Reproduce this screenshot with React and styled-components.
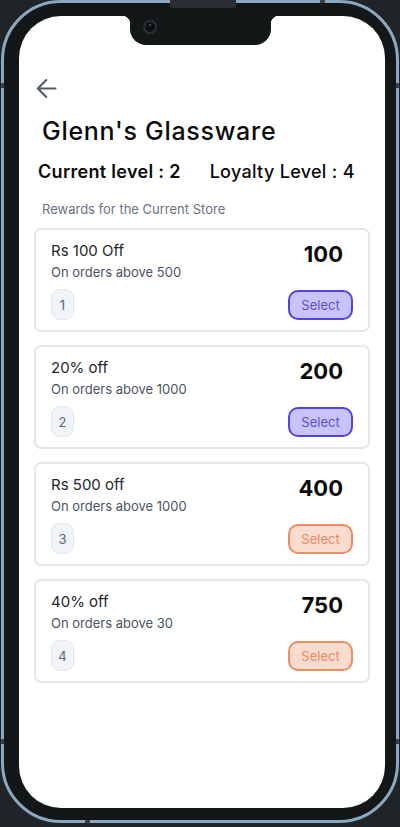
import React from 'react';
import styled, { createGlobalStyle, css } from 'styled-components';

const GlobalStyle = createGlobalStyle`
    html, body {
        margin: 0;
        padding: 0;
        background: #202428;
    }
    body {
        font-family: Inter, "Noto Sans", "Liberation Sans", sans-serif;
    }
    * {
        box-sizing: border-box;
    }
`;

const Page = styled.div`
    width: 400px;
    height: 827px;
    padding: 0 1px 4px 1px;
    background: #202428;
`;

const Frame = styled.div`
    position: relative;
    height: 100%;
    border: 3px solid #8aa8bf;
    border-radius: 60px;
    background: #131718;
    padding: 13px 11px 12px 15px;
    display: flex;
`;

const Speaker = styled.div`
    position: absolute;
    top: -3px;
    left: 166px;
    width: 66px;
    height: 8px;
    background: #2a2e33;
    border-radius: 0 0 3px 3px;
`;

const Band = styled.div`
    position: absolute;
    background: #3a4249;
    ${({ $side, $at }) => {
        if ($side === 'left') return css`left: -3px; top: ${$at}px; width: 3px; height: 5px;`;
        if ($side === 'right') return css`right: -3px; top: ${$at}px; width: 3px; height: 5px;`;
        if ($side === 'top') return css`top: -3px; left: ${$at}px; width: 5px; height: 3px;`;
        return css`bottom: -3px; left: ${$at}px; width: 5px; height: 3px;`;
    }}
`;

const Screen = styled.div`
    position: relative;
    flex: 1;
    background: #ffffff;
    border-radius: 42px;
    overflow: hidden;
    padding: 61px 15px 0 15px;
    display: flex;
    flex-direction: column;
`;

const Notch = styled.div`
    position: absolute;
    top: 0;
    left: 111px;
    width: 141px;
    height: 29px;
    background: #131718;
    border-radius: 0 0 16px 16px;

    &::before,
    &::after {
        content: '';
        position: absolute;
        top: 0;
        width: 8px;
        height: 8px;
    }
    &::before {
        left: -8px;
        background: radial-gradient(circle at 0 100%, transparent 8px, #131718 8.5px);
    }
    &::after {
        right: -8px;
        background: radial-gradient(circle at 100% 100%, transparent 8px, #131718 8.5px);
    }
`;

const Camera = styled.div`
    position: absolute;
    top: 4px;
    left: 13px;
    width: 14px;
    height: 14px;
    border-radius: 50%;
    background: #0c0e0f;
    border: 2px solid #2c3135;

    &::after {
        content: '';
        position: absolute;
        top: 2px;
        left: 4px;
        width: 2px;
        height: 2px;
        border-radius: 50%;
        background: #5a6066;
    }
`;

const BackButton = styled.button`
    align-self: flex-start;
    width: 22px;
    height: 22px;
    margin-left: 1px;
    padding: 0;
    border: none;
    background: none;
    color: #515a66;
    display: flex;
    align-items: center;
    justify-content: center;
`;

const Title = styled.h1`
    margin: 17px 0 0 8px;
    font-size: 25px;
    font-weight: 500;
    line-height: normal;
    color: #0a0a0a;
    letter-spacing: 0.7px;
`;

const LevelRow = styled.div`
    display: flex;
    gap: 29px;
    margin: 15px 0 0 4px;
`;

const LevelText = styled.span`
    font-size: 18px;
    font-weight: ${({ $strong }) => ($strong ? 600 : 500)};
    letter-spacing: 0.3px;
    color: #0a0a0a;
`;

const SectionLabel = styled.p`
    margin: 19px 0 0 8px;
    font-size: 13px;
    color: #6b7280;
`;

const CardList = styled.div`
    display: flex;
    flex-direction: column;
    gap: 13px;
    margin-top: 11px;
`;

const Card = styled.div`
    border: 2px solid #e3e6ea;
    border-radius: 7px;
    padding: 11px 15px 10px 15px;
    display: flex;
    flex-direction: column;
    gap: 8px;
`;

const CardTop = styled.div`
    display: flex;
    justify-content: space-between;
    align-items: flex-start;
`;

const Offer = styled.div`
    display: flex;
    flex-direction: column;
    gap: 2px;
`;

const OfferTitle = styled.span`
    font-size: 15px;
    line-height: 20px;
    color: #27272a;
`;

const OfferNote = styled.span`
    font-size: 13px;
    line-height: 18px;
    color: #4b5563;
`;

const Points = styled.span`
    font-size: 22px;
    font-weight: 650;
    line-height: normal;
    color: #0a0a0a;
    margin-right: 10px;
`;

const CardBottom = styled.div`
    display: flex;
    justify-content: space-between;
    align-items: center;
`;

const LevelBadge = styled.span`
    width: 23px;
    height: 31px;
    border-radius: 9px;
    background: #f1f4f8;
    border: 1.5px solid #e1e5ea;
    display: flex;
    align-items: center;
    justify-content: center;
    font-size: 13px;
    color: #5f6672;
`;

const tones = {
    purple: css`
        background: #c8c4fb;
        border-color: #4f45e4;
        color: #5b50d8;
    `,
    orange: css`
        background: #fadccf;
        border-color: #f08c63;
        color: #ee8a61;
    `,
};

const SelectButton = styled.button`
    width: 65px;
    height: 30px;
    border-radius: 10px;
    border: 2px solid;
    font-family: inherit;
    font-size: 13px;
    padding: 0;
    ${({ $tone }) => tones[$tone]}
`;

const rewards = [
    { title: 'Rs 100 Off', note: 'On orders above 500', points: 100, level: 1 },
    { title: '20% off', note: 'On orders above 1000', points: 200, level: 2 },
    { title: 'Rs 500 off', note: 'On orders above 1000', points: 400, level: 3 },
    { title: '40% off', note: 'On orders above 30', points: 750, level: 4 },
];

const currentLevel = 2;

const ArrowLeft = () => (
    <svg width="21" height="21" viewBox="0 0 21 21" fill="none" stroke="currentColor"
        strokeWidth="2" strokeLinecap="round" strokeLinejoin="round">
        <path d="M19.5 10.5H1.8M10.3 2 1.8 10.5 10.3 19" />
    </svg>
);

const App = () => {
    return (
        <Page>
            <GlobalStyle />
            <Frame>
                <Speaker />
                <Band $side="left" $at={80} />
                <Band $side="left" $at={736} />
                <Band $side="right" $at={80} />
                <Band $side="right" $at={736} />
                <Band $side="top" $at={316} />
                <Band $side="bottom" $at={81} />
                <Screen>
                    <Notch>
                        <Camera />
                    </Notch>
                    <BackButton aria-label="Back">
                        <ArrowLeft />
                    </BackButton>
                    <Title>Glenn's Glassware</Title>
                    <LevelRow>
                        <LevelText $strong>Current level : {currentLevel}</LevelText>
                        <LevelText>Loyalty Level : 4</LevelText>
                    </LevelRow>
                    <SectionLabel>Rewards for the Current Store</SectionLabel>
                    <CardList>
                        {rewards.map((r) => (
                            <Card key={r.level}>
                                <CardTop>
                                    <Offer>
                                        <OfferTitle>{r.title}</OfferTitle>
                                        <OfferNote>{r.note}</OfferNote>
                                    </Offer>
                                    <Points>{r.points}</Points>
                                </CardTop>
                                <CardBottom>
                                    <LevelBadge>{r.level}</LevelBadge>
                                    <SelectButton $tone={r.level <= currentLevel ? 'purple' : 'orange'}>
                                        Select
                                    </SelectButton>
                                </CardBottom>
                            </Card>
                        ))}
                    </CardList>
                </Screen>
            </Frame>
        </Page>
    );
};

export default App;
